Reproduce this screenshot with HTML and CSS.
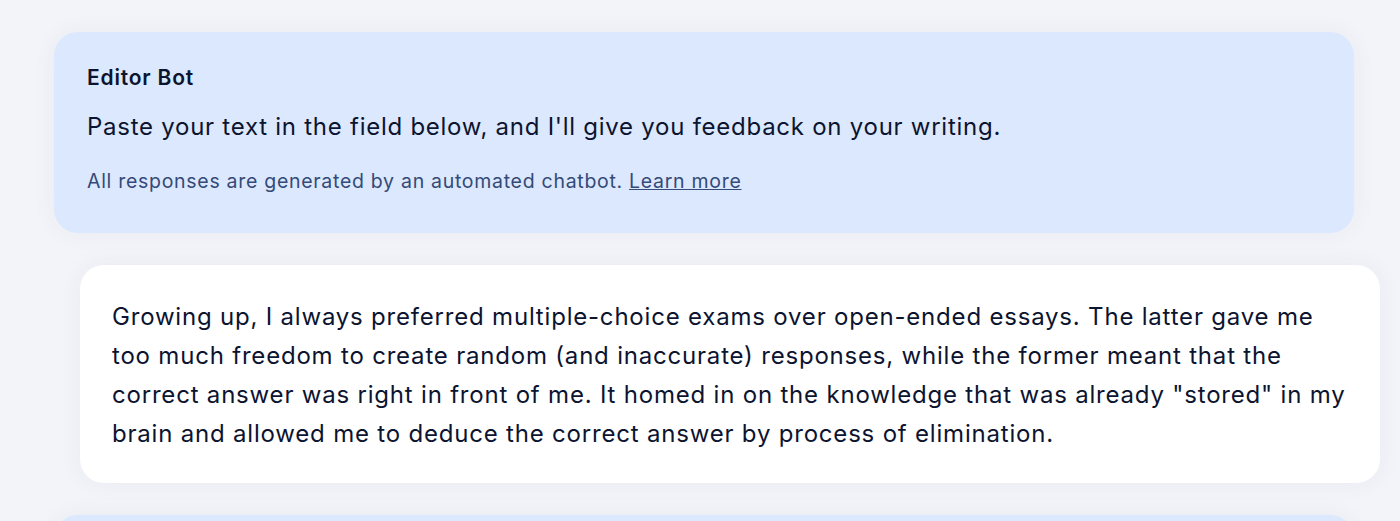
FILE: index.html
```html
<!DOCTYPE html>
<html>
<head>
<meta charset="utf-8">
<link rel="stylesheet" href="styles.css">
</head>
<body>
<div class="chat">
  <div class="card bot">
    <div class="name">Editor Bot</div>
    <p class="msg">Paste your text in the field below, and I'll give you feedback on your writing.</p>
    <p class="note">All responses are generated by an automated chatbot. <a href="#">Learn more</a></p>
  </div>
  <div class="card user">
    <p class="essay">Growing up, I always preferred multiple-choice exams over open-ended essays. The latter gave me too much freedom to create random (and inaccurate) responses, while the former meant that the correct answer was right in front of me. It homed in on the knowledge that was already "stored" in my brain and allowed me to deduce the correct answer by process of elimination.</p>
  </div>
  <div class="card bot next"></div>
</div>
</body>
</html>
```
FILE: styles.css
```css
html, body {
  margin: 0;
  padding: 0;
}
body {
  background: #f3f4f9;
  font-family: Inter, "Noto Sans", sans-serif;
  color: #0c1430;
  overflow: hidden;
  height: 521px;
}
.chat {
  display: flex;
  flex-direction: column;
  gap: 32px;
  padding-top: 32px;
}
.card {
  width: 1300px;
  box-sizing: border-box;
  border-radius: 24px;
  box-shadow: 0 0 24px rgba(30, 50, 110, 0.05);
}
.bot {
  margin-left: 54px;
  background: #dce8fd;
  padding: 33px 33px 39px;
}
.user {
  margin-left: 80px;
  background: #ffffff;
  padding: 32px 22px 30px 32px;
}
.next {
  height: 120px;
}
.name {
  font-size: 21px;
  font-weight: 600;
  line-height: 26px;
  letter-spacing: 0.8px;
}
.msg {
  margin: 20px 0 0;
  font-size: 24px;
  line-height: 32px;
  letter-spacing: 0.74px;
}
.note {
  margin: 25px 0 0;
  font-size: 19.5px;
  line-height: 26px;
  letter-spacing: 0.71px;
  color: #344a78;
}
.note a {
  color: #344a78;
}
.essay {
  margin: 0;
  font-size: 24px;
  line-height: 39px;
  letter-spacing: 0.8px;
}
```
